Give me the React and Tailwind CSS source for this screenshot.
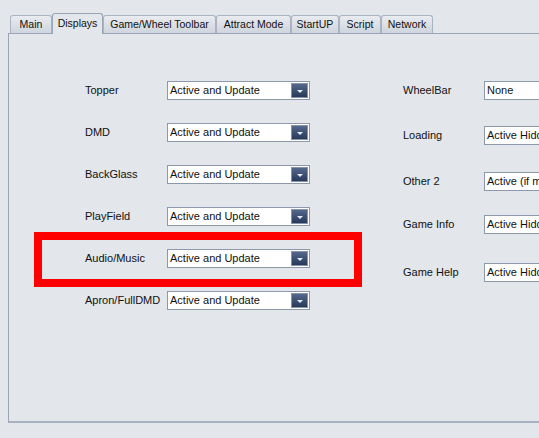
import React from 'react';

const tabs = [
  { name: 'Main', w: 'w-[42px]' },
  { name: 'Displays', w: 'w-[51px]', active: true },
  { name: 'Game/Wheel Toolbar', w: 'w-[113px]' },
  { name: 'Attract Mode', w: 'w-[75px]' },
  { name: 'StartUP', w: 'w-[48px]' },
  { name: 'Script', w: 'w-[42px]' },
  { name: 'Network', w: 'w-[52px]' },
];

const leftRows = ['Topper', 'DMD', 'BackGlass', 'PlayField', 'Audio/Music', 'Apron/FullDMD'];

const rightRows = [
  { label: 'WheelBar', value: 'None', mt: 'mt-0' },
  { label: 'Loading', value: 'Active Hidden', mt: 'mt-[26px]' },
  { label: 'Other 2', value: 'Active (if missing)', mt: 'mt-[27px]' },
  { label: 'Game Info', value: 'Active Hidden', mt: 'mt-[24px]' },
  { label: 'Game Help', value: 'Active Hidden', mt: 'mt-[29px]' },
];

function Combo({ value }) {
  return (
    <div className="relative flex h-[19px] w-[143px] shrink-0 items-center border border-[#8d99ab] bg-white pl-[2px]">
      <span className="whitespace-nowrap text-[11px] leading-none text-[#111]">{value}</span>
      <div className="absolute right-px top-px bottom-px flex w-[17px] items-center justify-center border border-[#8593ab] bg-gradient-to-b from-[#55678b] to-[#283a5c]">
        <div className="mt-[2px] h-0 w-0 border-l-[3px] border-r-[3px] border-t-[3px] border-l-transparent border-r-transparent border-t-[#e8edf5]" />
      </div>
    </div>
  );
}

export default function App() {
  return (
    <div
      className="relative h-[438px] w-[539px] overflow-hidden bg-[#e3e6ea] text-[#111]"
      style={{ fontFamily: '"Liberation Sans", Arial, sans-serif' }}
    >
      {/* tab strip */}
      <div className="flex h-[33px] items-end pl-[10px]">
        {tabs.map((t) =>
          t.active ? (
            <div
              key={t.name}
              className={`relative z-10 -mb-px flex h-[21px] ${t.w} items-start justify-center rounded-t-[3px] border border-b-0 border-[#99a4b4] bg-[#e3e6ea] pt-[4px] text-[10.5px] leading-none`}
            >
              {t.name}
            </div>
          ) : (
            <div
              key={t.name}
              className={`flex h-[18px] ${t.w} items-center justify-center rounded-t-[3px] border border-b-0 border-[#a9b3c1] bg-gradient-to-b from-[#e9ecf0] to-[#cfd5dd] text-[10.5px] leading-none`}
            >
              {t.name}
            </div>
          )
        )}
      </div>

      {/* tab panel */}
      <div className="ml-[8px] flex h-[390px] w-[600px] border-t border-l border-b-2 border-[#9aa5b5] border-b-[#a7b2c0]">
        <div className="flex flex-col gap-[23px] pl-[76px] pt-[47px]">
          {leftRows.map((label) => (
            <div key={label} className="flex h-[19px] items-center">
              <span className="w-[82px] text-[11px] leading-none">{label}</span>
              <Combo value="Active and Update" />
            </div>
          ))}
        </div>
        <div className="ml-[93px] flex flex-col pt-[47px]">
          {rightRows.map((r) => (
            <div key={r.label} className={`flex h-[19px] items-center ${r.mt}`}>
              <span className="w-[81px] text-[11px] leading-none">{r.label}</span>
              <Combo value={r.value} />
            </div>
          ))}
        </div>
      </div>

      {/* highlight */}
      <div className="pointer-events-none absolute left-[34px] top-[232px] h-[55px] w-[328px] border-[8px] border-[#ff0000]" />
    </div>
  );
}
